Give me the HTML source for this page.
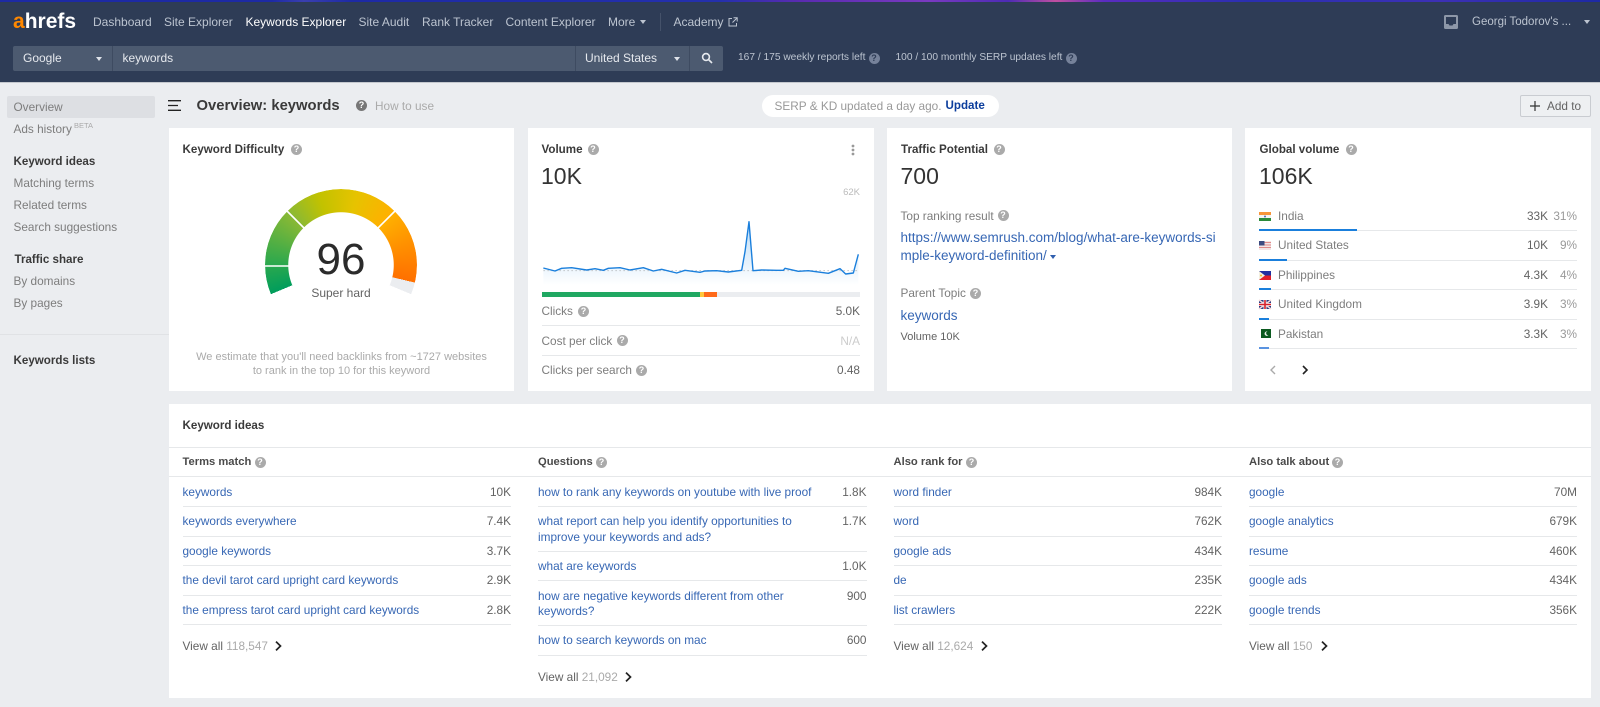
<!DOCTYPE html>
<html><head><meta charset="utf-8"><title>Ahrefs Keywords Explorer</title>
<style>
*{box-sizing:border-box}
html,body{margin:0;padding:0}
body{width:1600px;height:707px;overflow:hidden;background:#ebedf0;font-family:"Liberation Sans",Arial,sans-serif;font-size:11.8px;color:#333;position:relative}
.a{position:absolute}
.t{position:absolute;white-space:nowrap;line-height:16px;height:16px}
.r{text-align:right}
.n{color:#bcc4d0;font-size:12px}
.w{color:#fff;font-size:12px}
.g{color:#7d7d7d}
.v{color:#636363}
.b{font-weight:bold;font-size:11.6px;color:#3a3a3a}
.c{font-weight:bold;font-size:11.2px;color:#4a4a4a}
.l{color:#3767b4}
.line{position:absolute;height:1px;background:#e6e8ea}
.card{position:absolute;background:#fff}
.h{position:absolute;width:11px;height:11px;margin:-.5px;border-radius:50%;background:#aaa;color:#fff;font:bold 9px/11px "Liberation Sans",sans-serif;text-align:center}
.big{font-size:23px;line-height:28px;height:28px;color:#333}
.car{position:absolute;width:0;height:0;border-left:3.5px solid transparent;border-right:3.5px solid transparent;border-top:4px solid #dfe3ea}
.bar{position:absolute;height:2px;background:#1a7fdc}
svg{position:absolute;overflow:visible}
</style></head><body>

<div class="a" style="left:0;top:0;width:1600px;height:82px;background:#2e3c56"></div>
<div class="a" style="left:0;top:82px;width:1600px;height:1px;background:#c4c8ce"></div>
<div class="a" style="left:0;top:0;width:1600px;height:2px;background:linear-gradient(90deg,#1d2aa5 0,#1d2aa5 17%,#3a3fb0 19%,#1d2aa5 22%,#2430ad 45%,#5a2bb0 50%,#7a3ac0 58%,#4d2bb5 63%,#c04fa0 66%,#5a2cc0 69%,#2a2fb0 78%,#3c30b5 90%,#1d2aa5 100%)"></div>

<div class="t" style="left:13px;top:13px;font:bold 21px/18px 'Liberation Sans',sans-serif;height:18px;color:#fff"><span style="color:#ff8800">a</span>hrefs</div>
<div class="t n" style="left:93px;top:14px">Dashboard</div>
<div class="t n" style="left:164px;top:14px">Site Explorer</div>
<div class="t w" style="left:245.5px;top:14px">Keywords Explorer</div>
<div class="t n" style="left:358.5px;top:14px">Site Audit</div>
<div class="t n" style="left:422px;top:14px">Rank Tracker</div>
<div class="t n" style="left:505.5px;top:14px">Content Explorer</div>
<div class="t n" style="left:608px;top:14px">More</div>
<div class="car" style="left:639.5px;top:20px;border-top-color:#bcc4d0"></div>
<div class="a" style="left:660px;top:13px;width:1px;height:18px;background:#45526a"></div>
<div class="t n" style="left:673.5px;top:14px">Academy</div>
<svg style="left:728px;top:17px" width="10" height="10" viewBox="0 0 10 10" fill="none" stroke="#bcc4d0" stroke-width="1"><path d="M4 1.5H1V9H8.5V6M5.5 .8H9.2V4.5M9 1L4.5 5.5"/></svg>

<svg style="left:1444px;top:15px" width="14" height="14" viewBox="0 0 14 14"><rect x="0" y="0" width="14" height="14" rx="1.5" fill="#8d97a8"/><path d="M2 2H12V9H9.5L8.5 10.5H5.5L4.5 9H2Z" fill="#2e3c56"/></svg>
<div class="t n" style="left:1472px;top:14px;font-size:11.5px">Georgi Todorov's ...</div>
<div class="car" style="left:1584px;top:19.5px;border-top-color:#bcc4d0"></div>

<div class="a" style="left:13px;top:46px;width:710px;height:25px;background:#4c5a70;border-radius:2px"></div>
<div class="a" style="left:112px;top:46px;width:1px;height:25px;background:#3e4b61"></div>
<div class="a" style="left:575px;top:46px;width:1px;height:25px;background:#3e4b61"></div>
<div class="a" style="left:689px;top:46px;width:1px;height:25px;background:#3e4b61"></div>
<div class="t" style="left:23px;top:50px;color:#e6e9ee;font-size:12px">Google</div>
<div class="car" style="left:96px;top:57px"></div>
<div class="t" style="left:122.5px;top:50px;color:#e6e9ee;font-size:12px">keywords</div>
<div class="t" style="left:585px;top:50px;color:#e6e9ee;font-size:12px">United States</div>
<div class="car" style="left:673.5px;top:57px"></div>
<svg style="left:701px;top:52px" width="12" height="12" viewBox="0 0 12 12" fill="none" stroke="#e6e9ee" stroke-width="1.6"><circle cx="5" cy="5" r="3.4"/><path d="M7.5 7.5L11 11"/></svg>
<div class="t n" style="left:738px;top:50px;font-size:10.2px">167 / 175 weekly reports left</div>
<div class="h" style="left:869px;top:53px;background:#76829a;color:#2e3c56">?</div>
<div class="t n" style="left:895.5px;top:50px;font-size:10.2px">100 / 100 monthly SERP updates left</div>
<div class="h" style="left:1066px;top:53px;background:#76829a;color:#2e3c56">?</div>

<div class="a" style="left:7px;top:96px;width:148px;height:22px;background:#dddfe3;border-radius:2px"></div>
<div class="t g" style="left:13.5px;top:99px">Overview</div>
<div class="t g" style="left:13.5px;top:121px">Ads history</div>
<div class="t" style="left:74px;top:118px;font-size:7.5px;color:#aaa">BETA</div>
<div class="t b" style="left:13.5px;top:154px">Keyword ideas</div>
<div class="t g" style="left:13.5px;top:175px">Matching terms</div>
<div class="t g" style="left:13.5px;top:197px">Related terms</div>
<div class="t g" style="left:13.5px;top:219px">Search suggestions</div>
<div class="t b" style="left:14.5px;top:252px">Traffic share</div>
<div class="t g" style="left:13.5px;top:273px">By domains</div>
<div class="t g" style="left:13.5px;top:295px">By pages</div>
<div class="a" style="left:0;top:334px;width:169px;height:1px;background:#e0e2e5"></div>
<div class="t b" style="left:13.5px;top:353px">Keywords lists</div>

<svg style="left:168px;top:100px" width="13" height="11" viewBox="0 0 13 11" stroke="#222" stroke-width="1.3"><path d="M0 .7H13M0 5.5H10M0 10.3H13"/></svg>
<div class="t" style="left:196.5px;top:98px;font-weight:bold;font-size:14.8px;color:#3a3a3a">Overview: keywords</div>
<div class="h" style="left:356.5px;top:100.5px;background:#777">?</div>
<div class="t" style="left:375px;top:98px;color:#aaa">How to use</div>

<div class="a" style="left:761.5px;top:94.5px;width:237.5px;height:22.5px;background:#fff;border-radius:12px"></div>
<div class="t" style="left:774.5px;top:98px;color:#999">SERP &amp; KD updated a day ago.</div>
<div class="t" style="left:945.5px;top:98px;color:#0b3d9c;font-weight:bold;font-size:11.6px">Update</div>

<div class="a" style="left:1520px;top:94.5px;width:71px;height:22.5px;background:#eef0f2;border:1px solid #c9ccd1;border-radius:2px"></div>
<svg style="left:1530px;top:101px" width="10" height="10" viewBox="0 0 10 10" stroke="#333" stroke-width="1.2"><path d="M5 0V10M0 5H10"/></svg>
<div class="t v" style="left:1547px;top:98px">Add to</div>

<!-- Card 1 -->
<div class="card" style="left:169px;top:128px;width:345px;height:263px"></div>
<div class="t b" style="left:182.5px;top:142px">Keyword Difficulty</div>
<div class="h" style="left:291.5px;top:144.5px">?</div>
<div class="a" style="left:265px;top:189px;width:152px;height:152px;border-radius:50%;background:conic-gradient(from -112.6deg,#009d5c 0deg,#2aa84e 22.6deg,#8ab934 67.6deg,#c2c200 95deg,#e6c300 125deg,#ffb000 157.6deg,#ff9000 185deg,#ff7000 216deg,#ebedf0 216deg,#ebedf0 225.2deg,transparent 225.2deg);-webkit-mask:radial-gradient(circle,transparent 52.5px,#000 53px);mask:radial-gradient(circle,transparent 52.5px,#000 53px)"></div>
<svg style="left:265px;top:189px" width="152" height="152" viewBox="0 0 152 152" stroke="#fff" stroke-width="1.6"><path d="M-1 77H26M21 21L40 40M131 21L112 40"/></svg>
<div class="t" style="left:291px;top:236px;width:100px;text-align:center;font-size:44px;line-height:48px;height:48px;color:#2b2b2b">96</div>
<div class="t v" style="left:291px;top:285px;width:100px;text-align:center;font-size:12px">Super hard</div>
<div class="t" style="left:169px;top:349px;width:345px;text-align:center;color:#aaa;font-size:11px">We estimate that you'll need backlinks from ~1727 websites</div>
<div class="t" style="left:169px;top:363px;width:345px;text-align:center;color:#aaa;font-size:11px">to rank in the top 10 for this keyword</div>

<!-- Card 2 -->
<div class="card" style="left:528px;top:128px;width:346px;height:263px"></div>
<div class="t b" style="left:541.5px;top:142px">Volume</div>
<div class="h" style="left:588px;top:144.5px">?</div>
<svg style="left:850.5px;top:144px" width="4" height="12" viewBox="0 0 4 12" fill="#999"><circle cx="2" cy="2" r="1.4"/><circle cx="2" cy="6" r="1.4"/><circle cx="2" cy="10" r="1.4"/></svg>
<div class="t big" style="left:541px;top:162px">10K</div>
<div class="t" style="right:740px;top:185px;font-size:9.5px;color:#bbb">62K</div>
<svg style="left:515px;top:125px" width="345" height="265" viewBox="0 0 1035 795">
<defs><linearGradient id="f" x1="0" y1="0" x2="0" y2="1"><stop offset="0" stop-color="#bcdcf6"/><stop offset=".65" stop-color="#e6f2fc"/><stop offset="1" stop-color="#fff"/></linearGradient></defs>
<path d="M85 429L120 438 140 430 170 428 215 435 240 431 265 436 280 430 315 428 345 435 385 428 415 438 440 433 485 444 510 436 555 442 570 438 605 437 640 441 680 436 690 380 702 290 714 437 740 435 785 436 805 436 810 430 850 439 880 437 940 445 975 431 992 447 1015 444 1030 388V480H85Z" fill="url(#f)"/>
<path d="M85 437H1030" stroke="#c4c8cc" stroke-width="3" stroke-dasharray="5 7" fill="none"/>
<path d="M85 429L120 438 140 430 170 428 215 435 240 431 265 436 280 430 315 428 345 435 385 428 415 438 440 433 485 444 510 436 555 442 570 438 605 437 640 441 680 436 690 380 702 290 714 437 740 435 785 436 805 436 810 430 850 439 880 437 940 445 975 431 992 447 1015 444 1030 388" fill="none" stroke="#1a7fdc" stroke-width="4.2" stroke-linejoin="round"/>
</svg>
<div class="a" style="left:541.5px;top:291.5px;width:318.5px;height:5px;background:#ebedf0"></div>
<div class="a" style="left:541.5px;top:291.5px;width:158.5px;height:5px;background:#20a862"></div>
<div class="a" style="left:700px;top:291.5px;width:4px;height:5px;background:#ffc83c"></div>
<div class="a" style="left:704px;top:291.5px;width:12.5px;height:5px;background:#ff6a1a"></div>
<div class="t g" style="left:541.5px;top:303px">Clicks</div><div class="h" style="left:578.5px;top:306px">?</div>
<div class="t v r" style="right:740px;top:303px">5.0K</div>
<div class="line" style="left:541.5px;top:325px;width:318.5px"></div>
<div class="t g" style="left:541.5px;top:333px">Cost per click</div><div class="h" style="left:617px;top:335.5px">?</div>
<div class="t r" style="right:740px;top:333px;color:#ccc">N/A</div>
<div class="line" style="left:541.5px;top:355px;width:318.5px"></div>
<div class="t g" style="left:541.5px;top:362px">Clicks per search</div><div class="h" style="left:636.5px;top:365px">?</div>
<div class="t v r" style="right:740px;top:362px">0.48</div>

<!-- Card 3 -->
<div class="card" style="left:887px;top:128px;width:345px;height:263px"></div>
<div class="t b" style="left:901px;top:142px">Traffic Potential</div>
<div class="h" style="left:994px;top:144.5px">?</div>
<div class="t big" style="left:900.5px;top:162px">700</div>
<div class="t g" style="left:900.5px;top:208px">Top ranking result</div><div class="h" style="left:998px;top:210.5px">?</div>
<div class="t l" style="left:900.5px;top:230px;font-size:13.5px">https://www.semrush.com/blog/what-are-keywords-si</div>
<div class="t l" style="left:900.5px;top:248px;font-size:13.5px">mple-keyword-definition/</div>
<div class="car" style="left:1049.5px;top:255px;border-top-color:#2f5fae"></div>
<div class="t g" style="left:900.5px;top:285px">Parent Topic</div><div class="h" style="left:970.5px;top:288px">?</div>
<div class="t l" style="left:900.5px;top:308px;font-size:13.5px">keywords</div>
<div class="t v" style="left:900.5px;top:329px;font-size:11px">Volume 10K</div>

<!-- Card 4 -->
<div class="card" style="left:1245px;top:128px;width:346px;height:263px"></div>
<div class="t b" style="left:1259.5px;top:142px">Global volume</div>
<div class="h" style="left:1346px;top:144.5px">?</div>
<div class="t big" style="left:1259px;top:162px">106K</div>

<svg style="left:1259px;top:212px" width="12" height="9" viewBox="0 0 12 9"><rect width="12" height="3" fill="#f7953a"/><rect y="3" width="12" height="3" fill="#f4f4f4"/><rect y="6" width="12" height="3" fill="#2a8a3a"/><circle cx="6" cy="4.5" r="1" fill="#5a6ab0"/></svg>
<div class="t g" style="left:1278px;top:208px">India</div>
<div class="t v r" style="right:52px;top:208px">33K</div><div class="t r" style="right:23px;top:208px;color:#999">31%</div>
<div class="line" style="left:1259px;top:230px;width:318px"></div><div class="bar" style="left:1259px;top:229px;width:98px"></div>

<svg style="left:1259px;top:241px" width="12" height="9" viewBox="0 0 12 9"><rect width="12" height="9" fill="#f4e4e4"/><path d="M0 1.5H12M0 4H12M0 6.5H12" stroke="#e08a8a" stroke-width=".9"/><rect width="5.5" height="4.5" fill="#3c4a80"/></svg>
<div class="t g" style="left:1278px;top:237px">United States</div>
<div class="t v r" style="right:52px;top:237px">10K</div><div class="t r" style="right:23px;top:237px;color:#999">9%</div>
<div class="line" style="left:1259px;top:259.5px;width:318px"></div><div class="bar" style="left:1259px;top:258.5px;width:28px"></div>

<svg style="left:1259px;top:271px" width="12" height="9" viewBox="0 0 12 9"><rect width="12" height="4.5" fill="#2030a0"/><rect y="4.5" width="12" height="4.5" fill="#e0202a"/><path d="M0 0L6 4.5 0 9Z" fill="#f4f0e0"/><circle cx="2" cy="4.5" r="1" fill="#f0c020"/></svg>
<div class="t g" style="left:1278px;top:267px">Philippines</div>
<div class="t v r" style="right:52px;top:267px">4.3K</div><div class="t r" style="right:23px;top:267px;color:#999">4%</div>
<div class="line" style="left:1259px;top:289px;width:318px"></div><div class="bar" style="left:1259px;top:288px;width:12px"></div>

<svg style="left:1259px;top:300px" width="12" height="9" viewBox="0 0 12 9"><rect width="12" height="9" fill="#2a3a80"/><path d="M0 0L12 9M12 0L0 9" stroke="#f4d8d8" stroke-width="1.6"/><path d="M6 0V9M0 4.5H12" stroke="#f4f4f4" stroke-width="3"/><path d="M6 0V9M0 4.5H12" stroke="#d8202a" stroke-width="1.6"/></svg>
<div class="t g" style="left:1278px;top:296px">United Kingdom</div>
<div class="t v r" style="right:52px;top:296px">3.9K</div><div class="t r" style="right:23px;top:296px;color:#999">3%</div>
<div class="line" style="left:1259px;top:318.5px;width:318px"></div><div class="bar" style="left:1259px;top:317.5px;width:10px"></div>

<svg style="left:1261px;top:329px" width="10" height="9" viewBox="0 0 10 9"><rect width="10" height="9" fill="#0c5a20"/><path d="M6.5 2.5A2.2 2.2 0 1 0 7.5 6 1.8 1.8 0 1 1 6.5 2.5Z" fill="#e8f0e8"/></svg>
<div class="t g" style="left:1278px;top:326px">Pakistan</div>
<div class="t v r" style="right:52px;top:326px">3.3K</div><div class="t r" style="right:23px;top:326px;color:#999">3%</div>
<div class="line" style="left:1259px;top:348px;width:318px"></div><div class="bar" style="left:1259px;top:347px;width:10px;background:#5a93e0"></div>

<svg style="left:1270px;top:365px" width="6" height="10" viewBox="0 0 6 10" fill="none" stroke="#aaa" stroke-width="1.4"><path d="M5 1L1 5 5 9"/></svg>
<svg style="left:1302px;top:365px" width="6" height="10" viewBox="0 0 6 10" fill="none" stroke="#222" stroke-width="1.6"><path d="M1 1L5 5 1 9"/></svg>

<!-- Bottom -->
<div class="card" style="left:169px;top:404px;width:1422px;height:294px"></div>
<div class="t b" style="left:182.5px;top:418px">Keyword ideas</div>
<div class="line" style="left:169px;top:447px;width:1422px"></div>
<div class="line" style="left:169px;top:476px;width:1422px"></div>

<!-- col 1 -->
<div class="t c" style="left:182.5px;top:454px">Terms match</div><div class="h" style="left:255px;top:457px">?</div>
<div class="t l" style="left:182.5px;top:484px">keywords</div><div class="t v r" style="right:1089px;top:484px">10K</div><div class="line" style="left:182.5px;top:506px;width:328.5px"></div>
<div class="t l" style="left:182.5px;top:513px">keywords everywhere</div><div class="t v r" style="right:1089px;top:513px">7.4K</div><div class="line" style="left:182.5px;top:535.5px;width:328.5px"></div>
<div class="t l" style="left:182.5px;top:543px">google keywords</div><div class="t v r" style="right:1089px;top:543px">3.7K</div><div class="line" style="left:182.5px;top:565px;width:328.5px"></div>
<div class="t l" style="left:182.5px;top:572px">the devil tarot card upright card keywords</div><div class="t v r" style="right:1089px;top:572px">2.9K</div><div class="line" style="left:182.5px;top:595px;width:328.5px"></div>
<div class="t l" style="left:182.5px;top:602px">the empress tarot card upright card keywords</div><div class="t v r" style="right:1089px;top:602px">2.8K</div><div class="line" style="left:182.5px;top:624px;width:328.5px"></div>
<div class="t v" style="left:182.5px;top:638px">View all <span style="color:#aaa">118,547</span></div>
<svg style="left:275px;top:641px" width="7" height="10" viewBox="0 0 7 10" fill="none" stroke="#222" stroke-width="1.7"><path d="M1 .6L5.5 5 1 9.4"/></svg>

<!-- col 2 -->
<div class="t c" style="left:538px;top:454px">Questions</div><div class="h" style="left:596.5px;top:457px">?</div>
<div class="t l" style="left:538px;top:484px">how to rank any keywords on youtube with live proof</div><div class="t v r" style="right:733.5px;top:484px">1.8K</div><div class="line" style="left:538px;top:506px;width:328.5px"></div>
<div class="t l" style="left:538px;top:513px">what report can help you identify opportunities to</div><div class="t v r" style="right:733.5px;top:513px">1.7K</div>
<div class="t l" style="left:538px;top:528.5px">improve your keywords and ads?</div><div class="line" style="left:538px;top:551px;width:328.5px"></div>
<div class="t l" style="left:538px;top:558px">what are keywords</div><div class="t v r" style="right:733.5px;top:558px">1.0K</div><div class="line" style="left:538px;top:580px;width:328.5px"></div>
<div class="t l" style="left:538px;top:587.5px">how are negative keywords different from other</div><div class="t v r" style="right:733.5px;top:587.5px">900</div>
<div class="t l" style="left:538px;top:603px">keywords?</div><div class="line" style="left:538px;top:625px;width:328.5px"></div>
<div class="t l" style="left:538px;top:632px">how to search keywords on mac</div><div class="t v r" style="right:733.5px;top:632px">600</div><div class="line" style="left:538px;top:655px;width:328.5px"></div>
<div class="t v" style="left:538px;top:669px">View all <span style="color:#aaa">21,092</span></div>
<svg style="left:624.5px;top:672px" width="7" height="10" viewBox="0 0 7 10" fill="none" stroke="#222" stroke-width="1.7"><path d="M1 .6L5.5 5 1 9.4"/></svg>

<!-- col 3 -->
<div class="t c" style="left:893.5px;top:454px">Also rank for</div><div class="h" style="left:966.5px;top:457px">?</div>
<div class="t l" style="left:893.5px;top:484px">word finder</div><div class="t v r" style="right:378px;top:484px">984K</div><div class="line" style="left:893.5px;top:506px;width:328.5px"></div>
<div class="t l" style="left:893.5px;top:513px">word</div><div class="t v r" style="right:378px;top:513px">762K</div><div class="line" style="left:893.5px;top:535.5px;width:328.5px"></div>
<div class="t l" style="left:893.5px;top:543px">google ads</div><div class="t v r" style="right:378px;top:543px">434K</div><div class="line" style="left:893.5px;top:565px;width:328.5px"></div>
<div class="t l" style="left:893.5px;top:572px">de</div><div class="t v r" style="right:378px;top:572px">235K</div><div class="line" style="left:893.5px;top:595px;width:328.5px"></div>
<div class="t l" style="left:893.5px;top:602px">list crawlers</div><div class="t v r" style="right:378px;top:602px">222K</div><div class="line" style="left:893.5px;top:624px;width:328.5px"></div>
<div class="t v" style="left:893.5px;top:638px">View all <span style="color:#aaa">12,624</span></div>
<svg style="left:980.5px;top:641px" width="7" height="10" viewBox="0 0 7 10" fill="none" stroke="#222" stroke-width="1.7"><path d="M1 .6L5.5 5 1 9.4"/></svg>

<!-- col 4 -->
<div class="t c" style="left:1249px;top:454px">Also talk about</div><div class="h" style="left:1332.5px;top:457px">?</div>
<div class="t l" style="left:1249px;top:484px">google</div><div class="t v r" style="right:23px;top:484px">70M</div><div class="line" style="left:1249px;top:506px;width:328px"></div>
<div class="t l" style="left:1249px;top:513px">google analytics</div><div class="t v r" style="right:23px;top:513px">679K</div><div class="line" style="left:1249px;top:535.5px;width:328px"></div>
<div class="t l" style="left:1249px;top:543px">resume</div><div class="t v r" style="right:23px;top:543px">460K</div><div class="line" style="left:1249px;top:565px;width:328px"></div>
<div class="t l" style="left:1249px;top:572px">google ads</div><div class="t v r" style="right:23px;top:572px">434K</div><div class="line" style="left:1249px;top:595px;width:328px"></div>
<div class="t l" style="left:1249px;top:602px">google trends</div><div class="t v r" style="right:23px;top:602px">356K</div><div class="line" style="left:1249px;top:624px;width:328px"></div>
<div class="t v" style="left:1249px;top:638px">View all <span style="color:#aaa">150</span></div>
<svg style="left:1320.5px;top:641px" width="7" height="10" viewBox="0 0 7 10" fill="none" stroke="#222" stroke-width="1.7"><path d="M1 .6L5.5 5 1 9.4"/></svg>

</body></html>
